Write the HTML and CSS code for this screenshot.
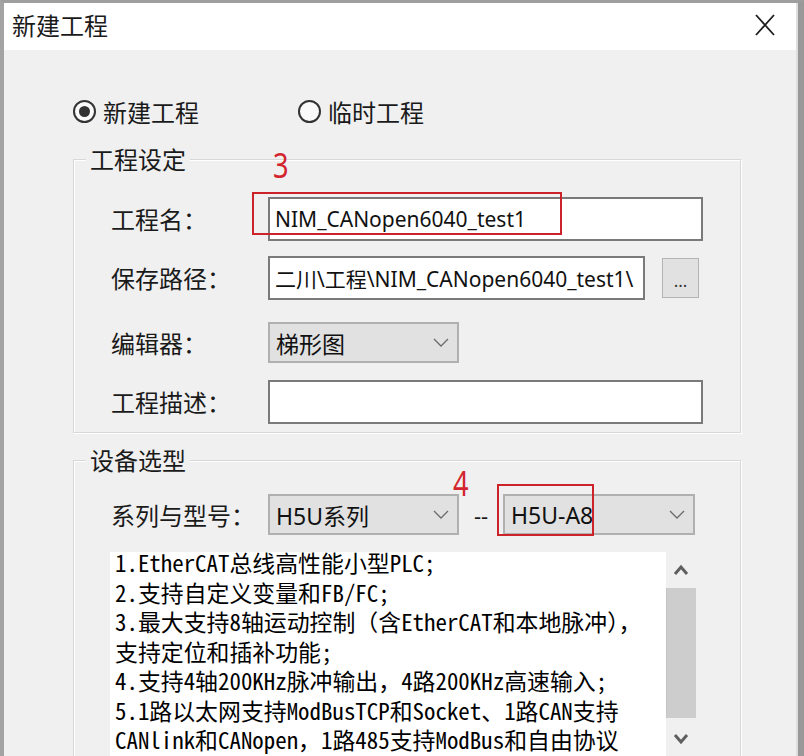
FILE: index.html
```html
<!DOCTYPE html>
<html lang="zh-CN">
<head>
<meta charset="utf-8">
<title>新建工程</title>
<link rel="stylesheet" href="styles.css">
</head>
<body>
<div class="window">
  <div class="titlebar">
    <span class="title">新建工程</span>
    <svg class="close" viewBox="0 0 20 22" width="20" height="22"><path d="M1 1 L19 21 M19 1 L1 21" stroke="#1e1e1e" stroke-width="1.8" fill="none"/></svg>
  </div>
  <div class="content">
    <div class="radios">
      <div class="radio-item first"><span class="radio on"><span class="dot"></span></span><span>新建工程</span></div>
      <div class="radio-item"><span class="radio"></span><span>临时工程</span></div>
    </div>

    <fieldset class="group g1">
      <legend>工程设定</legend>
      <div class="row r1">
        <span class="label">工程名：</span>
        <div class="input wide">NIM_CANopen6040_test1</div>
      </div>
      <div class="row r2">
        <span class="label">保存路径：</span>
        <div class="input path">二川\工程\NIM_CANopen6040_test1\</div>
        <div class="browse">...</div>
      </div>
      <div class="row r3">
        <span class="label">编辑器：</span>
        <div class="combo"><span>梯形图</span><svg class="chev" viewBox="0 0 16 9" width="16" height="9"><path d="M1 1 L8 8 L15 1" stroke="#6a6a6a" stroke-width="1.3" fill="none"/></svg></div>
      </div>
      <div class="row r4">
        <span class="label">工程描述：</span>
        <div class="input wide"></div>
      </div>
    </fieldset>

    <fieldset class="group g2">
      <legend>设备选型</legend>
      <div class="row">
        <span class="label">系列与型号：</span>
        <div class="combo"><span>H5U系列</span><svg class="chev" viewBox="0 0 16 9" width="16" height="9"><path d="M1 1 L8 8 L15 1" stroke="#6a6a6a" stroke-width="1.3" fill="none"/></svg></div>
        <span class="dash">--</span>
        <div class="combo model"><span>H5U-A8</span><svg class="chev" viewBox="0 0 16 9" width="16" height="9"><path d="M1 1 L8 8 L15 1" stroke="#6a6a6a" stroke-width="1.3" fill="none"/></svg></div>
      </div>
      <div class="memo">
        <div class="memo-text">
          <div class="lines">
            <div>1.EtherCAT总线高性能小型PLC;</div>
            <div>2.支持自定义变量和FB/FC;</div>
            <div>3.最大支持8轴运动控制（含EtherCAT和本地脉冲），</div>
            <div>支持定位和插补功能;</div>
            <div>4.支持4轴200KHz脉冲输出，4路200KHz高速输入;</div>
            <div>5.1路以太网支持ModBusTCP和Socket、1路CAN支持</div>
            <div>CANlink和CANopen，1路485支持ModBus和自由协议</div>
          </div>
        </div>
        <div class="vscroll">
          <div class="sb-btn up"><svg viewBox="0 0 16 12" width="16" height="12"><path d="M2 10 L8 3 L14 10" stroke="#5f5f5f" stroke-width="3" fill="none"/></svg></div>
          <div class="thumb"></div>
          <div class="sb-btn down"><svg viewBox="0 0 16 12" width="16" height="12"><path d="M2 2 L8 9 L14 2" stroke="#5f5f5f" stroke-width="3" fill="none"/></svg></div>
        </div>
      </div>
    </fieldset>
  </div>

  <div class="mark box1"></div>
  <div class="mark box2"></div>
  <span class="num n3">3</span>
  <span class="num n4">4</span>
</div>
</body>
</html>
```

FILE: styles.css
```css
html, body {
  margin: 0;
  padding: 0;
  background: #f0f0f0;
}

.window {
  position: relative;
  width: 804px;
  height: 756px;
  box-sizing: border-box;
  border-top: 3px solid #9e9e9e;
  border-left: 4px solid #a3a3a3;
  border-right: 6px solid #999999;
  background: #f0f0f0;
  overflow: hidden;
  font-family: "Noto Sans CJK SC", "Noto Sans", sans-serif;
  color: #1a1a1a;
}

.titlebar {
  height: 47px;
  background: #ffffff;
  display: flex;
  align-items: center;
  padding-left: 8px;
  box-shadow: inset -2px 0 0 #dedede;
}

.title {
  font-size: 24px;
  line-height: 34px;
  margin-bottom: 3px;
}

.close {
  margin-left: auto;
  margin-right: 23px;
  margin-bottom: 4px;
}

.content {
  padding-left: 69px;
  box-shadow: inset -2px 0 0 #dedede;
  height: 706px;
}

.radios {
  display: flex;
  align-items: center;
  height: 34px;
  padding-top: 44px;
  font-size: 24px;
}

.radio-item {
  display: flex;
  align-items: center;
}

.radio-item.first {
  width: 225px;
}

.radio {
  width: 23px;
  height: 23px;
  box-sizing: border-box;
  border: 2px solid #333333;
  border-radius: 50%;
  background: #fafafa;
  margin-right: 7px;
  display: flex;
  align-items: center;
  justify-content: center;
}

.radio .dot {
  width: 11px;
  height: 11px;
  border-radius: 50%;
  background: #333333;
}

.group {
  margin: 14px 0 0 0;
  padding: 21px 37px 8px 12px;
  width: 668px;
  box-sizing: border-box;
  min-width: 0;
  border: 1px solid #d8d8d8;
  box-shadow: inset 1px 1px 0 #ffffff, 1px 1px 0 #ffffff;
}

.group legend {
  font-size: 24px;
  line-height: 34px;
  padding: 0 4px;
  background: #f0f0f0;
}

.g2 {
  margin-top: 10px;
  padding-top: 17px;
  padding-bottom: 40px;
}

.row {
  display: flex;
  align-items: center;
  margin-left: 25px;
}

.r2 { margin-top: 15px; }
.r3 { margin-top: 22px; }
.r4 { margin-top: 17px; }

.label {
  flex: none;
  width: 157px;
  font-size: 24px;
  line-height: 34px;
}

.input {
  flex: none;
  box-sizing: border-box;
  height: 44px;
  border: 2px solid #7a7a7a;
  background: #ffffff;
  font-family: "Noto Sans", "Noto Sans CJK SC", sans-serif;
  font-size: 21px;
  color: #111111;
  padding-left: 5px;
  display: flex;
  align-items: center;
  white-space: nowrap;
  overflow: hidden;
}

.wide { width: 435px; }
.path { width: 377px; }

.browse {
  flex: none;
  box-sizing: border-box;
  width: 37px;
  height: 40px;
  margin-left: 17px;
  border: 1px solid #b4b4b4;
  background: #e1e1e1;
  font-family: "Noto Sans", sans-serif;
  font-size: 17px;
  text-align: center;
  line-height: 44px;
  color: #333333;
}

.combo {
  flex: none;
  box-sizing: border-box;
  width: 191px;
  height: 41px;
  border: 2px solid #b0b0b0;
  background: #e1e1e1;
  display: flex;
  align-items: center;
  padding: 0 8px 0 6px;
  font-family: "Noto Sans", "Noto Sans CJK SC", sans-serif;
  font-size: 23px;
  color: #111111;
}

.combo.model { width: 192px; }

.chev {
  margin-left: auto;
}

.dash {
  flex: none;
  width: 44px;
  text-align: center;
  font-family: "Noto Sans", sans-serif;
  font-size: 22px;
}

.memo {
  display: flex;
  width: 586px;
  height: 208px;
  margin-top: 17px;
  margin-left: 24px;
}

.memo-text {
  flex: 1;
  background: #ffffff;
  padding-left: 5px;
  font-family: "Noto Sans Mono CJK SC", "Liberation Mono", "Noto Sans CJK SC", monospace;
  font-size: 22.9px;
  line-height: 29.5px;
  color: #000000;
  white-space: nowrap;
  overflow: hidden;
}

.lines {
  margin-top: -4px;
}

.vscroll {
  flex: none;
  width: 30px;
  display: flex;
  flex-direction: column;
  background: #f0f0f0;
}

.sb-btn {
  display: flex;
  align-items: center;
  justify-content: center;
}

.sb-btn.up { height: 36px; }
.sb-btn.down { height: 42px; }

.thumb {
  height: 130px;
  background: #cdcdcd;
  box-shadow: inset 1px 0 0 #c4c4c4;
}

.mark {
  position: absolute;
  box-sizing: border-box;
  border: 2px solid #cc2229;
}

.box1 {
  left: 248px;
  top: 189px;
  width: 310px;
  height: 43px;
}

.box2 {
  left: 493px;
  top: 481px;
  width: 97px;
  height: 52px;
}

.num {
  position: absolute;
  color: #d3252d;
  font-family: "Noto Sans", sans-serif;
  font-size: 34px;
  line-height: 34px;
  transform: scaleX(0.8);
  transform-origin: left top;
}

.n3 { left: 269px; top: 145px; }
.n4 { left: 449px; top: 463px; }
```
